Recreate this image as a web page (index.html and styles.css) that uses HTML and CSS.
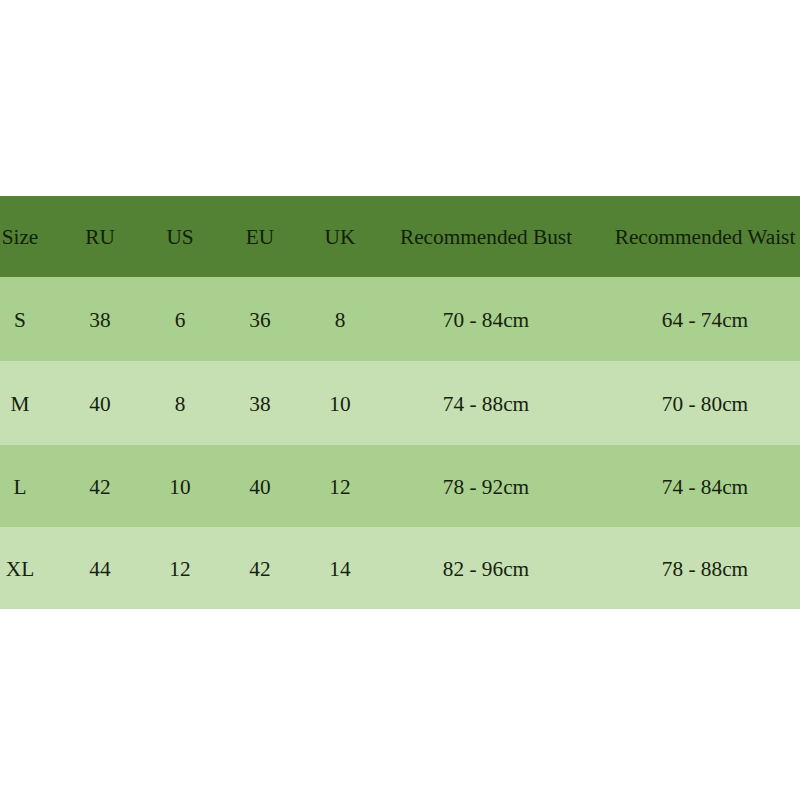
FILE: index.html
```html
<!DOCTYPE html>
<html>
<head>
<meta charset="utf-8">
<link rel="stylesheet" href="styles.css">
</head>
<body>
<div class="page">
<table class="sizes">
  <colgroup>
    <col class="c-size"><col class="c-num"><col class="c-num"><col class="c-num"><col class="c-num"><col class="c-bust"><col class="c-waist">
  </colgroup>
  <thead>
    <tr class="head"><th>Size</th><th>RU</th><th>US</th><th>EU</th><th>UK</th><th>Recommended Bust</th><th>Recommended Waist</th></tr>
  </thead>
  <tbody>
    <tr class="odd r1"><td>S</td><td>38</td><td>6</td><td>36</td><td>8</td><td>70 - 84cm</td><td>64 - 74cm</td></tr>
    <tr class="even r2"><td>M</td><td>40</td><td>8</td><td>38</td><td>10</td><td>74 - 88cm</td><td>70 - 80cm</td></tr>
    <tr class="odd r3"><td>L</td><td>42</td><td>10</td><td>40</td><td>12</td><td>78 - 92cm</td><td>74 - 84cm</td></tr>
    <tr class="even r4"><td>XL</td><td>44</td><td>12</td><td>42</td><td>14</td><td>82 - 96cm</td><td>78 - 88cm</td></tr>
  </tbody>
</table>
</div>
</body>
</html>
```
FILE: styles.css
```css
html, body {
  margin: 0;
  padding: 0;
  background: #ffffff;
  overflow: hidden;
}
.page {
  width: 800px;
  height: 800px;
  overflow: hidden;
  padding-top: 196px;
  box-sizing: border-box;
}
.sizes {
  margin-left: -20px;
  width: 838px;
  border-collapse: collapse;
  table-layout: fixed;
  font-family: "Liberation Serif", "Times New Roman", serif;
  font-size: 21.3px;
  color: #16220e;
}
.c-size { width: 80px; }
.c-num { width: 80px; }
.c-bust { width: 212px; }
.c-waist { width: 226px; }
.sizes th, .sizes td {
  padding: 2px 0 0;
  text-align: center;
  vertical-align: middle;
  font-weight: normal;
  white-space: nowrap;
}
.head { background: #548235; height: 81px; }
.head th { color: #12200b; }
.odd { background: #a9d08e; }
.even { background: #c6e0b4; }
.r1, .r2 { height: 84px; }
.r3, .r4 { height: 82px; }
```
